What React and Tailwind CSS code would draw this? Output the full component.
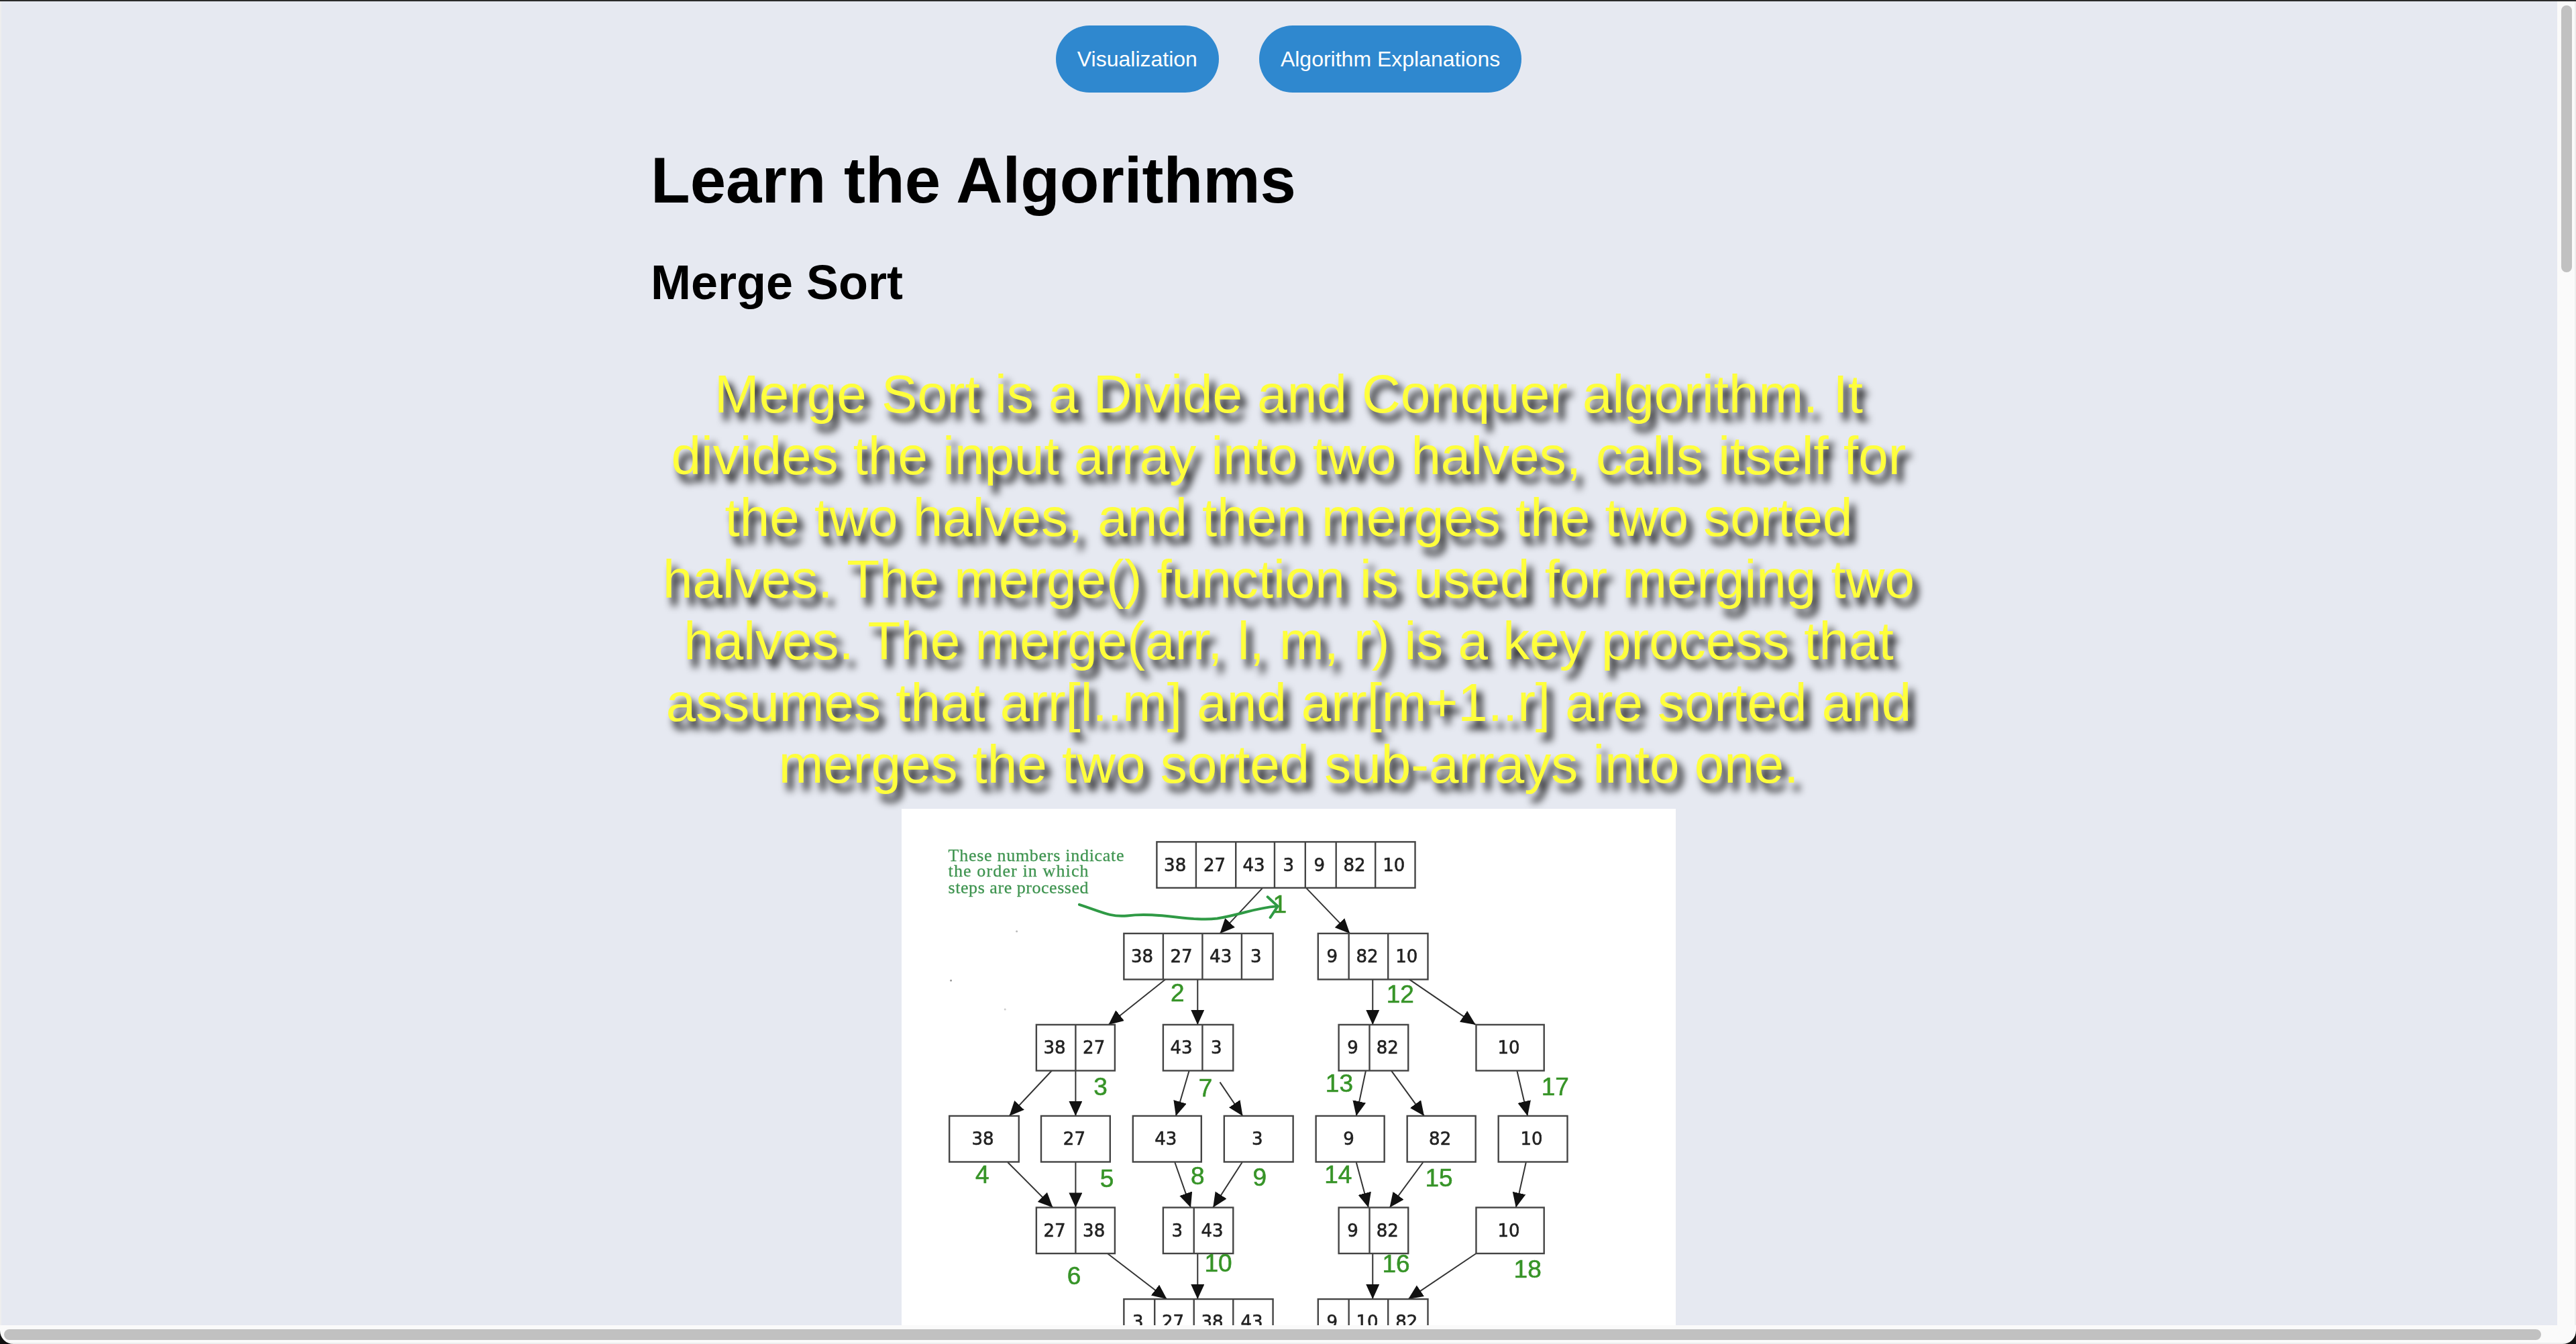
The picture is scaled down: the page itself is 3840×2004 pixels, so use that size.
import React from 'react';

// diagram coordinates were read off a stretched crop, so convert them here
const X = (v) => (v - 55) / 1.2645;
const Y = (v) => (v - 30) / 1.926;

const ROWS = [
  [125, [536, 610, 685, 758, 816, 874, 948, 1023], ['38', '27', '43', '3', '9', '82', '10']],
  [388, [474, 548, 622, 696, 755], ['38', '27', '43', '3']],
  [388, [840, 898, 972, 1047], ['9', '82', '10']],
  [650, [309, 383, 457], ['38', '27']],
  [650, [548, 622, 680], ['43', '3']],
  [650, [879, 937, 1010], ['9', '82']],
  [650, [1138, 1266], ['10']],
  [912, [145, 276], ['38']],
  [912, [318, 448], ['27']],
  [912, [491, 620], ['43']],
  [912, [663, 793], ['3']],
  [912, [836, 965], ['9']],
  [912, [1008, 1137], ['82']],
  [912, [1180, 1310], ['10']],
  [1175, [309, 383, 457], ['27', '38']],
  [1175, [548, 606, 680], ['3', '43']],
  [1175, [879, 937, 1010], ['9', '82']],
  [1175, [1138, 1266], ['10']],
  [1438, [474, 532, 606, 680, 755], ['3', '27', '38', '43']],
  [1438, [840, 898, 972, 1047], ['9', '10', '82']],
];

const ARROWS = [
  [735, 258, 655, 388], [818, 258, 900, 388],
  [552, 520, 445, 650], [613, 520, 613, 650], [943, 520, 943, 650], [1012, 520, 1137, 650],
  [338, 782, 258, 912], [383, 782, 383, 912], [597, 782, 572, 912], [655, 815, 698, 912],
  [930, 782, 912, 912], [978, 782, 1040, 912], [1215, 782, 1235, 912],
  [255, 1045, 340, 1175], [383, 1045, 383, 1175], [570, 1045, 600, 1175], [697, 1045, 642, 1175],
  [912, 1045, 935, 1175], [1038, 1045, 975, 1175], [1232, 1045, 1213, 1175],
  [443, 1307, 555, 1438], [613, 1307, 613, 1438], [943, 1307, 943, 1438], [1138, 1307, 1010, 1438],
];

const STEPS = [
  ['1', 768, 305], ['2', 575, 558], ['12', 995, 563], ['3', 430, 828], ['7', 628, 832],
  ['13', 880, 818], ['17', 1287, 828], ['4', 207, 1080], ['5', 442, 1093], ['8', 613, 1085],
  ['9', 730, 1088], ['14', 878, 1080], ['15', 1068, 1090], ['6', 380, 1372], ['10', 652, 1335],
  ['16', 987, 1337], ['18', 1235, 1352],
];

const NOTE = [
  ['These numbers indicate', 163, 262],
  ['the order in which', 208, 209],
  ['steps are processed', 256, 209],
];

function MergeDiagram() {
  return (
    <svg width="1154" height="770" viewBox="0 0 1154 770" className="mt-5 block shrink-0 bg-white">
      <defs>
        <marker id="head" markerUnits="userSpaceOnUse" markerWidth="24" markerHeight="22" refX="22" refY="10" orient="auto">
          <path d="M0 0 L22 10 L0 20 Z" fill="#111" />
        </marker>
      </defs>
      <g className="blur-[0.6px]">
        {ARROWS.map(([x1, y1, x2, y2], i) => (
          <line key={i} x1={X(x1)} y1={Y(y1)} x2={X(x2)} y2={Y(y2)} stroke="#333" strokeWidth="2" markerEnd="url(#head)" />
        ))}
        {ROWS.map(([y, xs, labels], i) => (
          <g key={i}>
            <rect x={X(xs[0])} y={Y(y)} width={X(xs[xs.length - 1]) - X(xs[0])} height={132 / 1.926} fill="#fff" stroke="#444" strokeWidth="2.4" />
            {xs.slice(1, -1).map((v) => (
              <line key={v} x1={X(v)} x2={X(v)} y1={Y(y)} y2={Y(y + 132)} stroke="#444" strokeWidth="2.4" />
            ))}
            {labels.map((t, j) => (
              <text key={j} x={(X(xs[j]) + X(xs[j + 1])) / 2 - 2} y={Y(y + 66)} textAnchor="middle" dominantBaseline="central" fontSize="26" fill="#222" stroke="#222" strokeWidth="0.6" className="font-['DejaVu_Sans']">
                {t}
              </text>
            ))}
          </g>
        ))}
        {STEPS.map(([t, x, y]) => (
          <text key={t} x={X(x)} y={Y(y)} textAnchor="middle" dominantBaseline="central" fontSize="37" fill="#379428" stroke="#379428" strokeWidth="0.6" className="font-['Liberation_Sans']">
            {t}
          </text>
        ))}
        {NOTE.map(([t, y, w]) => (
          <text key={t} x={X(143)} y={Y(y)} dominantBaseline="central" fontSize="26" fill="#3f9450" stroke="#3f9450" strokeWidth="0.3" textLength={w} className="font-['Liberation_Serif']">
            {t}
          </text>
        ))}
        <path
          d={`M${X(390)} ${Y(305)} C${X(430)} ${Y(325)} ${X(450)} ${Y(342)} ${X(480)} ${Y(337)} C${X(540)} ${Y(325)} ${X(600)} ${Y(355)} ${X(650)} ${Y(345)} C${X(700)} ${Y(332)} ${X(720)} ${Y(315)} ${X(762)} ${Y(310)} M${X(745)} ${Y(283)} L${X(764)} ${Y(310)} L${X(750)} ${Y(342)}`}
          fill="none"
          stroke="#2f9a45"
          strokeWidth="4"
          strokeLinecap="round"
        />
        <circle cx={X(272)} cy={Y(382)} r="1.5" fill="#bbb" />
        <circle cx={X(148)} cy={Y(523)} r="1.5" fill="#999" />
        <circle cx={X(250)} cy={Y(606)} r="1.5" fill="#ccc" />
      </g>
    </svg>
  );
}

function Corner({ className, d }) {
  return (
    <svg width="20" height="20" viewBox="0 0 20 20" className={className}>
      <path d={d} fill="#111" />
    </svg>
  );
}

export default function App() {
  return (
    <div className="relative flex h-screen w-screen flex-col overflow-hidden border-t-2 border-[#2b2b2b] bg-[#fafafa] font-['Liberation_Sans',sans-serif]">
      <div className="flex min-h-0 flex-1">
        <main className="min-w-0 flex-1 overflow-hidden border-l-2 border-[#eeeeee] bg-[#e6e9f1]">
          <div className="flex w-[3838px] flex-col items-center">
            <nav className="flex justify-center gap-[60px] pt-9">
              <button className="h-[100px] rounded-full bg-[#2f88cf] px-8 text-[32px] text-white">Visualization</button>
              <button className="h-[100px] rounded-full bg-[#2f88cf] px-8 text-[32px] text-white">Algorithm Explanations</button>
            </nav>
            <section className="flex w-[1920px] flex-col items-center">
              <h1 className="mt-[76px] w-full pl-[9px] text-[96px] leading-[110px] font-bold text-black">Learn the Algorithms</h1>
              <h2 className="mt-14 w-full pl-[9px] text-[72px] leading-[83px] font-bold text-black">Merge Sort</h2>
              <p className="mt-[79px] w-full text-center text-[80px] leading-[92px] text-[#ffff3c] [text-shadow:8px_12px_12px_#000]">
                Merge Sort is a Divide and Conquer algorithm. It divides the input array into two halves, calls itself for the two halves, and then merges the two sorted halves. The merge() function is used for merging two halves. The merge(arr, l, m, r) is a key process that assumes that arr[l..m] and arr[m+1..r] are sorted and merges the two sorted sub-arrays into one.
              </p>
              <MergeDiagram />
            </section>
          </div>
        </main>
        {/* vertical scrollbar */}
        <div className="w-7 shrink-0 border-r-2 border-[#eeeeee] pt-1.5 pl-1.5">
          <div className="h-[398px] w-4 rounded-full bg-[#c1c1c1]" />
        </div>
      </div>
      {/* horizontal scrollbar */}
      <div className="h-7 shrink-0 border-b-2 border-[#eeeeee] pt-1.5 pl-1.5">
        <div className="h-4 w-[3782px] rounded-full bg-[#c1c1c1]" />
      </div>
      <Corner className="absolute bottom-0 left-0" d="M0 0 A20 20 0 0 0 20 20 L0 20 Z" />
      <Corner className="absolute right-0 bottom-0" d="M20 0 A20 20 0 0 1 0 20 L20 20 Z" />
    </div>
  );
}
